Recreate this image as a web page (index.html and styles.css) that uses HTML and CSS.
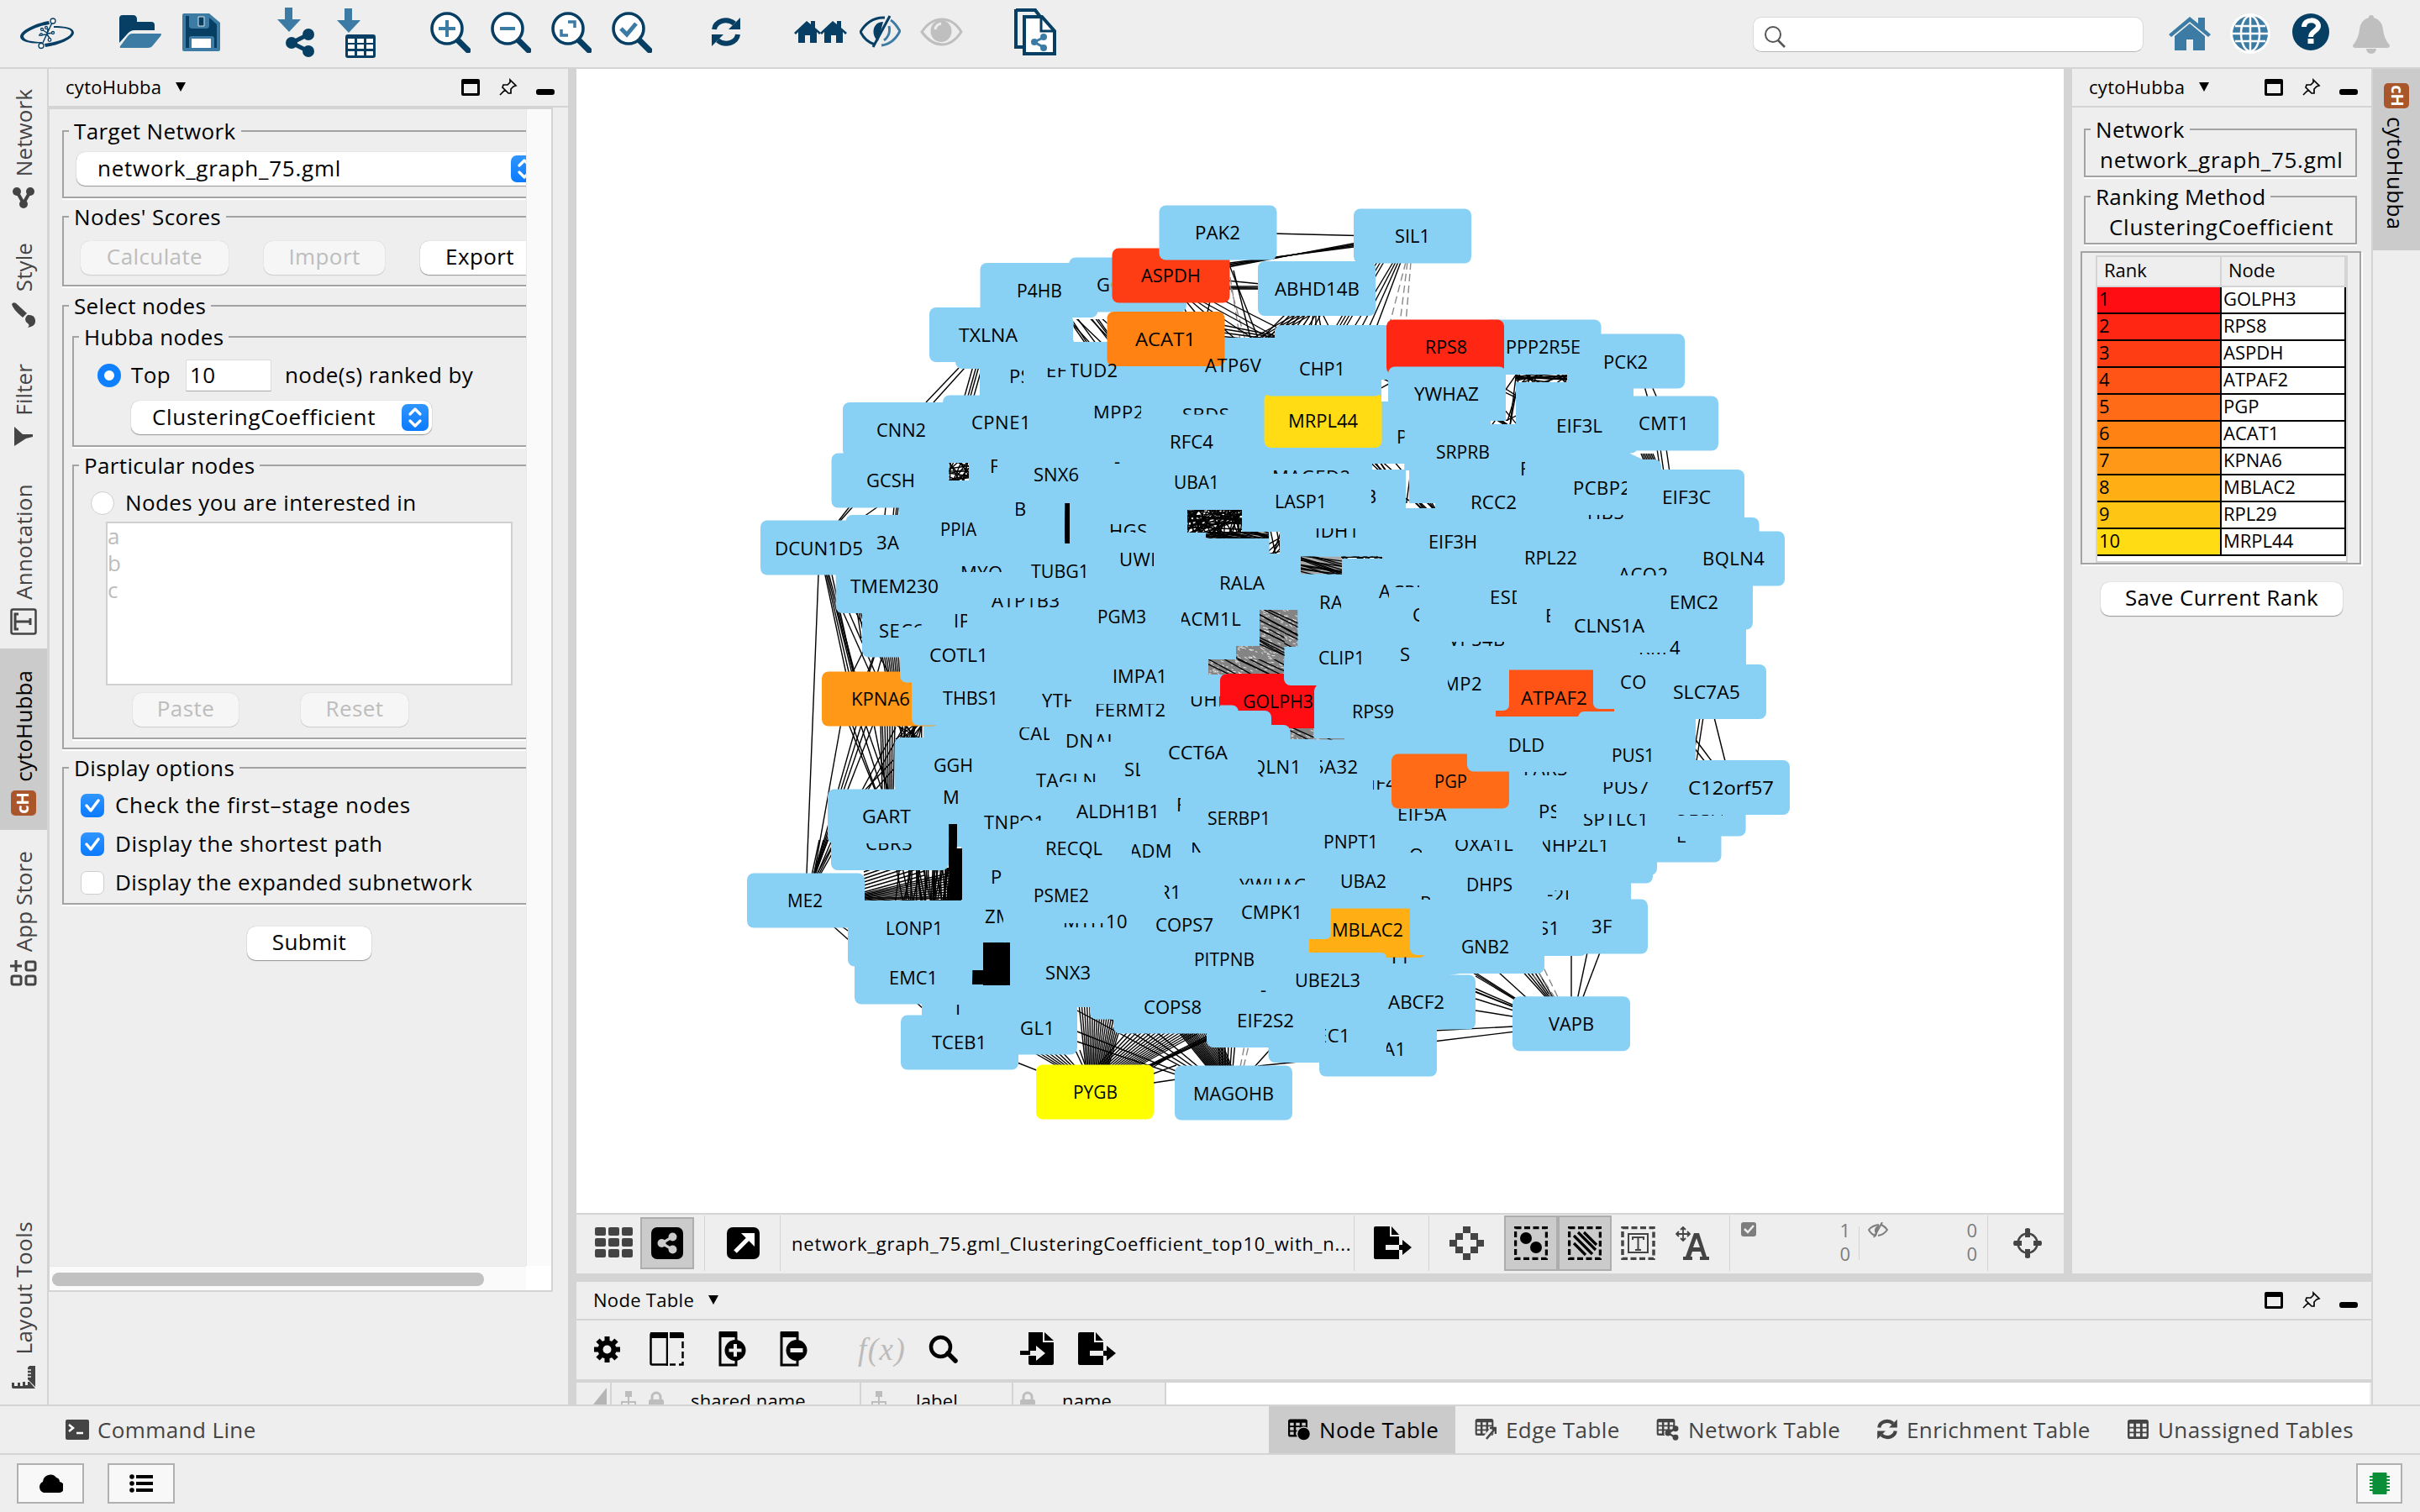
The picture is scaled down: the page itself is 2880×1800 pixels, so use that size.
FILE: index.html
```html
<!DOCTYPE html>
<html lang="en">
<head>
<meta charset="utf-8">
<title>Cytoscape</title>
<link rel="stylesheet" href="styles.css">
</head>
<body>
<svg class="defs" width="0" height="0">
  <defs>
    <linearGradient id="blueGrad" x1="0" y1="0" x2="0" y2="1"><stop offset="0" stop-color="#2f95ff"/><stop offset="1" stop-color="#0a7aff"/></linearGradient>
    <symbol id="float" viewBox="0 0 22 20"><path fill-rule="evenodd" d="M2 0h18a2 2 0 0 1 2 2v16a2 2 0 0 1-2 2H2a2 2 0 0 1-2-2V2a2 2 0 0 1 2-2zM3 6v11h16V6z"/></symbol>
    <symbol id="pin" viewBox="0 0 22 22"><path d="M13 2l7 7-3 1-3 3 0 5-3 0-7-7 1-3 5 0 3-3zM7 14l-6 6" fill="none" stroke="#000" stroke-width="1.7"/></symbol>
    <symbol id="mini" viewBox="0 0 22 20"><rect y="12" width="22" height="7" rx="3"/></symbol>
    <symbol id="share" viewBox="0 0 24 24"><path d="M18 5L6 12l12 7" fill="none" stroke="currentColor" stroke-width="3"/><circle cx="18" cy="5" r="4.6" fill="currentColor"/><circle cx="6" cy="12" r="4.6" fill="currentColor"/><circle cx="18" cy="19" r="4.6" fill="currentColor"/></symbol>
    <symbol id="refresh" viewBox="0 0 36 36"><path d="M4 15C5 6 18 0 28 8" fill="none" stroke="currentColor" stroke-width="6"/><path d="M35 1v14H21z" fill="currentColor"/><path d="M32 21C31 30 18 36 8 28" fill="none" stroke="currentColor" stroke-width="6"/><path d="M1 35V21h14z" fill="currentColor"/></symbol>
    <symbol id="lens" viewBox="0 0 48 50"><path d="M30 32l15 15" stroke="#063f63" stroke-width="7" stroke-linecap="round"/><circle cx="20" cy="21" r="18" fill="#fff" stroke="#063f63" stroke-width="3.6"/></symbol>
    <symbol id="grid3" viewBox="0 0 26 24"><path fill-rule="evenodd" fill="currentColor" d="M3 0h20a3 3 0 0 1 3 3v18a3 3 0 0 1-3 3H3a3 3 0 0 1-3-3V3a3 3 0 0 1 3-3zM2.500 5v4h5V5zm8 0v4h5V5zm8 0v4h5V5zM2.500 11v4h5v-4zm8 0v4h5v-4zm8 0v4h5v-4zM2.500 17v4h5v-4zm8 0v4h5v-4zm8 0v4h5v-4z"/></symbol>
    <symbol id="export" viewBox="0 0 45 40"><path d="M2 0h17v12h11v10H14v6h16v11H2a2 2 0 0 1-2-2V2a2 2 0 0 1 2-2z"/><path d="M21 0l9 10h-9zM30 22h4v-6l11 9-11 9v-6h-4z"/></symbol>
    <symbol id="import" viewBox="0 0 40 40"><path d="M10 0h17v12h13v25a2 2 0 0 1-2 2H12a2 2 0 0 1-2-2v-9h9v6l11-9-11-9v6h-9z"/><path d="M29 0l11 10H29zM0 22h12v5H0z"/></symbol>
    <symbol id="lock" viewBox="0 0 18 26"><path d="M4 12V8a5 5 0 0 1 10 0v4" fill="none" stroke="#bdbdbd" stroke-width="3"/><rect y="11" width="18" height="15" rx="2" fill="#bdbdbd"/></symbol>
    <symbol id="tree" viewBox="0 0 24 26"><path d="M8 1h8v7H8zM11 8h2v5h8v6h-2v-4h-6v4h-2v-4H5v4H3v-6h8zM0 18h7v8H0zm9 0h6v8H9zm8 0h7v8h-7z" fill="#bdbdbd"/></symbol>
    <symbol id="updown" viewBox="0 0 32 32"><rect width="32" height="32" rx="7" fill="url(#blueGrad)"/><path d="M10 12l6-6 6 6M10 20l6 6 6-6" fill="none" stroke="#fff" stroke-width="3.200" stroke-linecap="round" stroke-linejoin="round"/></symbol>
  </defs>
</svg>

<div class="app">
  <header class="toolbar">
    <svg class="t-logo" width="64" height="80"><path d="M34 25C18 28 0 36 0 44c1 6 12 8 26 7.500v-1.500C14 50 4 48 4 43c2-5 16-12 31-14zM40 31c14 0 24 2 24 8-1 8-19 15-34 17l-1-4c17-2 32-8 32-14-1-4-9-5-21-5z" fill="#063f63"/><path d="M38 27L26 53M26 35l7 5M41 39l-9 1M33 34l-1 8M22 42l10-1M32 41l4 6" stroke="#063f63" stroke-width="1.500"/><g fill="#fff" stroke="#063f63" stroke-width="1.300"><circle cx="39" cy="25" r="3"/><circle cx="25" cy="54.500" r="3"/><circle cx="26" cy="35" r="1.500"/><circle cx="31" cy="33" r="1.500"/><circle cx="39" cy="39" r="1.500"/><circle cx="25" cy="41" r="1.300"/><circle cx="35" cy="47.500" r="1.800"/></g></svg>
    <svg class="t-open" width="51" height="80"><path d="M0 51V22q0-4 4-4h12q5 0 5 5v3h17q4 0 4 4v6H18q-5 0-9 5z" fill="#063f63"/><path d="M15 40h34q2 0 0 3l-9 11q-2 3-6 3H2q-2 0-1-2l9-12q2-3 5-3z" fill="#3b7ba4"/></svg>
    <svg class="t-save" width="46" height="80"><path d="M2 16h30l13 11v32q0 2-2 2H2q-2 0-2-2V18q0-2 2-2z" fill="#3b7ba4"/><path d="M4 19h4v12q0 3 4 3h16q4 0 4-3V21l9 8v28h-3V46q0-3-3-3H11q-3 0-3 3v11H4z" fill="#063f63"/><path d="M19 20h7v11h-7z" fill="#063f63" stroke="#dfe8ee" stroke-width="1"/><path d="M11 46h23v11H11z" fill="#fff"/></svg>
    <svg class="t-impnet" width="46" height="80"><path d="M9 9h9v14h10L14 38 0 23h9z" fill="#3b7ba4"/><path d="M37 41L17 51l20 10" fill="none" stroke="#063f63" stroke-width="5"/><g fill="#063f63"><circle cx="37" cy="41" r="7"/><circle cx="17" cy="51" r="7"/><circle cx="37" cy="61" r="7"/></g></svg>
    <svg class="t-imptab" width="47" height="80"><path d="M9 10h9v14h10L14 39 0 24h9z" fill="#3b7ba4"/><rect x="10" y="41" width="36" height="28" rx="3" fill="#063f63"/><path d="M13 46h8v5h-8zm11 0h8v5h-8zm11 0h8v5h-8zM13 53h8v5h-8zm11 0h8v5h-8zm11 0h8v5h-8zM13 61h8v5h-8zm11 0h8v5h-8zm11 0h8v5h-8z" fill="#fff"/></svg>
    <svg class="t-zin" width="49" height="80"><use href="#lens" y="13" width="48" height="50"/><path d="M20 24v20M10 34h20" stroke="#3b7ba4" stroke-width="4"/></svg>
    <svg class="t-z" width="49" height="80"><use href="#lens" y="13" width="48" height="50"/><path d="M11 34h18" stroke="#3b7ba4" stroke-width="4"/></svg>
    <svg class="t-z" width="49" height="80"><use href="#lens" y="13" width="48" height="50"/><path d="M20 26h8v7M12 35v7h8" fill="none" stroke="#3b7ba4" stroke-width="3.500"/></svg>
    <svg class="t-z" width="49" height="80"><use href="#lens" y="13" width="48" height="50"/><path d="M11 34l7 7 11-13" fill="none" stroke="#3b7ba4" stroke-width="5"/></svg>
    <svg class="t-refresh navy" width="36" height="80"><use href="#refresh" y="20" width="36" height="36"/></svg>
    <svg class="t-houses" width="63" height="80" fill="#063f63"><path id="hs" d="M0 39l15-14 5 4v-4h5v8l7 6-2 2-3-3v13h-8v-9h-6v9H5V38l-3 3z"/><use href="#hs" x="31"/></svg>
    <svg class="t-eye" width="49" height="80"><path d="M30 21C16 20 6 29 1 38c4 8 10 13 17 15" fill="none" stroke="#063f63" stroke-width="3"/><path d="M28 26c-13 0-15 16-6 23z" fill="#063f63"/><path d="M36 19L16 56" stroke="#063f63" stroke-width="3"/><path d="M37 24c5 3 8 8 11 13-5 10-12 16-22 17M35 31c2 8-2 14-6 17" fill="none" stroke="#3b7ba4" stroke-width="3"/></svg>
    <svg class="t-eye2" width="51" height="80"><path d="M2 38q10-15 24-15t23 15q-10 15-23 15T2 38z" fill="none" stroke="#bfbfbf" stroke-width="3"/><ellipse cx="25" cy="37" rx="12.500" ry="13" fill="#bfbfbf"/><path d="M18 35q1-6 7-7" stroke="#eee" stroke-width="3" fill="none"/></svg>
    <svg class="t-docs" width="51" height="80"><path d="M2 12h23l6 8M2 11v45h10" fill="none" stroke="#063f63" stroke-width="4"/><path d="M12 20h21l15 17v27H12z" fill="#fff" stroke="#063f63" stroke-width="4"/><path d="M32 20v17h15" fill="none" stroke="#063f63" stroke-width="3"/><path d="M36 44l-12 6 12 7" fill="none" stroke="#3b7ba4" stroke-width="3"/><g fill="#3b7ba4"><circle cx="35" cy="44" r="4"/><circle cx="24" cy="50" r="4"/><circle cx="35" cy="57" r="4"/></g></svg>
    <span class="grow"></span>
    <div class="search"><svg width="28" height="30"><circle cx="11" cy="12" r="9" fill="none" stroke="#555" stroke-width="2"/><path d="M17 19l8 8" stroke="#555" stroke-width="2.500"/></svg></div>
    <svg class="t-home" width="50" height="80" fill="#3b7ba4"><path d="M0 41l25-21 10 8v-7h8v14l7 6-3 3L25 26 3 44z"/><path d="M7 43l18-15 18 15v17H29V47h-8v13H7z"/></svg>
    <svg class="t-globe" width="48" height="80"><circle cx="24" cy="40" r="24" fill="#fff"/><circle cx="24" cy="40" r="21" fill="#3b7ba4"/><path d="M24 19v42M3 40h42M6 31h36M6 49h36" stroke="#fff" stroke-width="2.500"/><ellipse cx="24" cy="40" rx="11" ry="21" fill="none" stroke="#fff" stroke-width="2.500"/></svg>
    <svg class="t-help" width="44" height="80"><circle cx="22" cy="38" r="22" fill="#063f63"/><path d="M14 32c0-10 17-10 17-1 0 6-9 6-9 13" fill="none" stroke="#fff" stroke-width="6"/><path d="M18.500 46h7v6h-7z" fill="#fff"/></svg>
    <svg class="t-bell" width="44" height="80" fill="#bfbfbf"><path d="M22 18q3 0 3 3 10 3 11 14t8 19q0 3-3 3H3q-3 0-3-3 7-8 8-19T19 21q0-3 3-3z"/><path d="M16 58a6 6 0 0 0 12 0z"/></svg>
  </header>

  <div class="middle">
    <nav class="strip">
      <div class="vtab v1"><span class="vt">Network</span><svg width="26" height="25" viewBox="0 0 26 25" fill="#444"><path d="M5 5l8 14 8-14" fill="none" stroke="#444" stroke-width="4"/><circle cx="5" cy="5" r="5"/><circle cx="21" cy="5" r="5"/><circle cx="13" cy="20" r="5"/></svg></div>
      <div class="vtab v2"><span class="vt">Style</span><svg width="28" height="30" viewBox="0 0 28 30" fill="#444"><path d="M0 2q2-3 5-1l13 12-5 5Q1 8 0 2z"/><path d="M19 15q8-1 9 6t-9 9q3-3 0-5t-3-5 3-5z"/></svg></div>
      <div class="vtab v3"><span class="vt">Filter</span><svg width="22" height="23" viewBox="0 0 22 23" fill="#444"><path d="M0 0l10 9h12v3l-8 2-14 9z"/></svg></div>
      <div class="vtab v4"><span class="vt">Annotation</span><svg width="32" height="32" viewBox="0 0 32 32" fill="none" stroke="#444"><rect x="1.500" y="1.500" width="29" height="29" rx="2" stroke-width="2.500"/><path d="M6 16h18M10 7H6v18h4M24 12v8" stroke-width="3"/></svg></div>
      <div class="vtab v5 on"><span class="vt">cytoHubba</span><div class="badge up"><b>cH</b></div></div>
      <div class="vtab v6"><span class="vt">App Store</span><svg width="32" height="31" viewBox="0 0 32 31" fill="none" stroke="#444" stroke-width="3"><rect x="19" y="2" width="11" height="10" rx="2"/><rect x="19" y="19" width="11" height="10" rx="2"/><rect x="2" y="19" width="11" height="10" rx="2"/><path d="M7 0v14M0 7h14"/></svg></div>
      <span class="grow"></span>
      <div class="vtab v7"><span class="vt">Layout Tools</span><svg width="28" height="28" viewBox="0 0 28 28" fill="#444"><path d="M0 20h3v4h4v-4h3v4h3v-5h3v4h3v-4h2l7 8H2q-2 0-2-2z"/><path d="M21 0h7v25l-9-9V2z"/><path d="M19 5h4M19 9h4M19 13h4" stroke="#eee" stroke-width="1.500"/></svg></div>
    </nav>

    <section class="left">
      <div class="phead"><span class="pname">cytoHubba</span><i class="tri"></i><span class="grow"></span><svg class="h1" width="22" height="20"><use href="#float"/></svg><svg class="h2" width="22" height="22"><use href="#pin"/></svg><svg class="h3" width="22" height="20"><use href="#mini"/></svg></div>
      <div class="scroll">
        <div class="view"><div class="form">
          <fieldset class="f1"><legend>Target Network</legend><div class="combo c1"><span>network_graph_75.gml</span><svg width="32" height="32"><use href="#updown"/></svg></div></fieldset>
          <fieldset class="f2"><legend>Nodes' Scores</legend><div class="row"><button class="b1" disabled>Calculate</button><button class="b2" disabled>Import</button><button class="b3">Export</button></div></fieldset>
          <fieldset class="f3"><legend>Select nodes</legend>
            <fieldset class="f4"><legend>Hubba nodes</legend>
              <div class="row toprow"><i class="radio on"></i><span class="top">Top</span><span class="input">10</span><span class="ranked">node(s) ranked by</span></div>
              <div class="combo c2"><span>ClusteringCoefficient</span><svg width="32" height="32"><use href="#updown"/></svg></div>
            </fieldset>
            <fieldset class="f5"><legend>Particular nodes</legend>
              <div class="row radrow"><i class="radio"></i><span>Nodes you are interested in</span></div>
              <div class="area"><div>a</div><div>b</div><div>c</div></div>
              <div class="row prow"><button class="b4" disabled>Paste</button><button class="b5" disabled>Reset</button></div>
            </fieldset>
          </fieldset>
          <fieldset class="f6"><legend>Display options</legend>
            <div class="checks">
              <div class="row"><i class="check on"><svg width="28" height="28"><path d="M7 14l5 6 9-12" fill="none" stroke="#fff" stroke-width="3.500" stroke-linecap="round" stroke-linejoin="round"/></svg></i><span class="k-first">Check the first–stage nodes</span></div>
              <div class="row"><i class="check on"><svg width="28" height="28"><path d="M7 14l5 6 9-12" fill="none" stroke="#fff" stroke-width="3.500" stroke-linecap="round" stroke-linejoin="round"/></svg></i><span class="k-path">Display the shortest path</span></div>
              <div class="row"><i class="check"></i><span class="k-sub">Display the expanded subnetwork</span></div>
            </div>
          </fieldset>
          <button class="submit">Submit</button>
        </div></div>
        <div class="vbar"></div>
        <div class="hbar"><div class="thumb"></div></div>
        <div class="corner"></div>
      </div>
    </section>

    <div class="center">
      <div class="upper">
        <section class="net">
          <svg id="graph" class="graph" width="1770" height="1362" viewBox="686 82 1770 1362"></svg>
          <div class="nbar">
            <svg class="n-grid" width="45" height="36" fill="#444"><path d="M2 0h9q2 0 2 2v6q0 2-2 2H2Q0 10 0 8V2Q0 0 2 0z" id="sq"/><use href="#sq" x="16"/><use href="#sq" x="32"/><use href="#sq" y="13"/><use href="#sq" x="16" y="13"/><use href="#sq" x="32" y="13"/><use href="#sq" y="26"/><use href="#sq" x="16" y="26"/><use href="#sq" x="32" y="26"/></svg>
            <div class="nbtn nb1"><svg width="38" height="38"><rect width="38" height="38" rx="7"/><g color="#ccc"><use href="#share" x="6" y="6" width="26" height="26"/></g></svg></div>
            <i class="sep s1"></i>
            <svg class="n-arrow" width="39" height="38"><rect width="39" height="38" rx="7"/><path d="M10 29L29 10" stroke="#fff" stroke-width="5"/><path d="M17 7h16v16z" fill="#fff"/></svg>
            <i class="sep s2"></i>
            <span class="ntitle">network_graph_75.gml_ClusteringCoefficient_top10_with_n...</span>
            <i class="sep s3"></i>
            <svg class="n-exp" width="45" height="40"><use href="#export"/></svg>
            <i class="sep s4"></i>
            <svg class="n-dia" width="41" height="40" fill="#444"><path id="dq" d="M16 0h9v8h-9z"/><use href="#dq" x="-9" y="8"/><use href="#dq" x="9" y="8"/><use href="#dq" x="-16" y="16"/><use href="#dq" x="16" y="16"/><use href="#dq" x="-9" y="24"/><use href="#dq" x="9" y="24"/><use href="#dq" y="32"/></svg>
            <div class="nbtn nb2"><svg width="40" height="40"><rect x="1.500" y="1.500" width="37" height="37" fill="none" stroke="#000" stroke-width="3.500" stroke-dasharray="7 3.500"/><circle cx="14" cy="14" r="7"/><circle cx="26" cy="25" r="7"/></svg></div>
            <div class="nbtn nb3"><svg width="40" height="40"><rect x="1.500" y="1.500" width="37" height="37" fill="none" stroke="#000" stroke-width="3.500" stroke-dasharray="7 3.500"/><path d="M7 11l22 22M7 20l14 14M12 7l21 21M19 7l15 15" stroke="#000" stroke-width="3.200"/></svg></div>
            <svg class="n-t" width="41" height="40"><rect x="2" y="1.500" width="37" height="37" fill="none" stroke="#444" stroke-width="3.500" stroke-dasharray="7 3.500"/><rect x="9" y="9" width="23" height="22" fill="none" stroke="#444" stroke-width="2"/><path d="M14 16v-3h13v3M20.500 13v15M17 28h7" fill="none" stroke="#444" stroke-width="2"/></svg>
            <svg class="n-a" width="41" height="40" fill="#444"><path d="M24 8h-2L12 36H9v4h11v-4h-2l2-6h10l2 6h-3v4h11v-4h-3L28 8zM21 25l4-11 4 11z" fill-rule="evenodd"/><path d="M9 1v16M1 9h16M6 4l3-3 3 3M6 14l3 3 3-3M4 6L1 9l3 3M14 6l3 3-3 3" stroke="#444" stroke-width="1.800" fill="none"/></svg>
            <i class="sep s5"></i>
            <div class="cnt c-a"><svg width="18" height="18"><rect width="18" height="17" rx="3" fill="#7d7d7d"/><path d="M4 8l4 4 7-8" stroke="#eee" stroke-width="2.500" fill="none"/></svg><div class="nums"><div>1</div><div>0</div></div></div>
            <i class="sep short"></i>
            <div class="cnt c-b"><svg width="24" height="20" fill="none" stroke="#7d7d7d" stroke-width="2"><path d="M13 3Q5 4 1 9q3 6 9 7M16 3q4 2 7 6-4 6-11 7M17 0L7 18"/><path d="M12 5q-5 3-2 8z" fill="#7d7d7d"/></svg><div class="nums"><div>0</div><div>0</div></div></div>
            <i class="sep s6"></i>
            <svg class="n-tgt" width="34" height="36"><circle cx="17" cy="18" r="11.500" fill="none" stroke="#444" stroke-width="2.500"/><path d="M14 1q3-2 6 0v10h-6zM14 25h6v10q-3 2-6 0zM1 15h9v6H1q-2-3 0-6zM24 15h9q2 3 0 6h-9z" fill="#444"/></svg>
          </div>
        </section>
        <section class="right">
          <div class="phead"><span class="pname">cytoHubba</span><i class="tri"></i><span class="grow"></span><svg class="h1" width="22" height="20"><use href="#float"/></svg><svg class="h2" width="22" height="22"><use href="#pin"/></svg><svg class="h3" width="22" height="20"><use href="#mini"/></svg></div>
          <div class="rbody">
            <fieldset class="r1"><legend>Network</legend><div class="rt">network_graph_75.gml</div></fieldset>
            <fieldset class="r2"><legend>Ranking Method</legend><div class="rt rt2">ClusteringCoefficient</div></fieldset>
            <div class="rankbox"><table class="rank">
              <thead><tr><th>Rank</th><th>Node</th></tr></thead>
              <tbody>
                <tr><td class="k1">1</td><td>GOLPH3</td></tr><tr><td class="k2">2</td><td>RPS8</td></tr><tr><td class="k3">3</td><td>ASPDH</td></tr><tr><td class="k4">4</td><td>ATPAF2</td></tr><tr><td class="k5">5</td><td>PGP</td></tr><tr><td class="k6">6</td><td>ACAT1</td></tr><tr><td class="k7">7</td><td>KPNA6</td></tr><tr><td class="k8">8</td><td>MBLAC2</td></tr><tr><td class="k9">9</td><td>RPL29</td></tr><tr><td class="k10">10</td><td>MRPL44</td></tr>
              </tbody></table></div>
            <button class="saverank">Save Current Rank</button>
          </div>
        </section>
      </div>
      <section class="tablepanel">
        <div class="phead nt"><span class="pname">Node Table</span><i class="tri"></i><span class="grow"></span><svg class="h1" width="22" height="20"><use href="#float"/></svg><svg class="h2" width="22" height="22"><use href="#pin"/></svg><svg class="h3" width="22" height="20"><use href="#mini"/></svg></div>
        <div class="tbar">
          <svg class="m-gear" width="31" height="31"><circle cx="15.500" cy="15.500" r="8" fill="none" stroke="#000" stroke-width="6"/><path d="M15.500 0v6M15.500 25v6M0 15.500h6M25 15.500h6M4.500 4.500l4 4M22.500 22.500l4 4M4.500 26.500l4-4M22.500 8.500l4-4" stroke="#000" stroke-width="6"/></svg>
          <svg class="m-col" width="41" height="40"><path d="M20 1.500H3q-1.500 0-1.500 1.500v34q0 1.500 1.500 1.500h17M21 0v40" fill="none" stroke="#000" stroke-width="2.500"/><path d="M1 0h38q2 0 2 2v5H1z"/><path d="M23 0v40" stroke="#eee" stroke-width="2"/><path d="M39.500 11v27.500H24" fill="none" stroke="#000" stroke-width="2.500" stroke-dasharray="8 4"/></svg>
          <svg class="m-add" width="33" height="42"><path d="M21 12V2H2v38h19v-6" fill="none" stroke="#000" stroke-width="3"/><path d="M1 0h21v7H1z"/><circle cx="20" cy="22.500" r="12.500"/><path d="M20 15v15M12.500 22.500h15" stroke="#eee" stroke-width="4"/></svg>
          <svg class="m-del" width="33" height="42"><path d="M21 12V2H2v38h19v-6" fill="none" stroke="#000" stroke-width="3"/><path d="M1 0h21v7H1z"/><circle cx="20" cy="22.500" r="12.500"/><path d="M12.500 22.500h15" stroke="#eee" stroke-width="5"/></svg>
          <span class="fx">f(x)</span>
          <svg class="m-find" width="35" height="34"><circle cx="14.500" cy="14.500" r="11.500" fill="none" stroke="#000" stroke-width="4.500"/><path d="M23 22l9 9" stroke="#000" stroke-width="5.500" stroke-linecap="round"/></svg>
          <svg class="m-imp" width="40" height="40"><use href="#import"/></svg>
          <svg class="m-exp" width="45" height="40"><use href="#export"/></svg>
        </div>
        <div class="thead">
          <div class="tc tc0"><svg width="16" height="26"><path d="M16 6v20H0z" fill="#b5b5b5"/></svg></div>
          <div class="tc tc1"><svg width="24" height="26"><use href="#tree"/></svg><svg class="lk" width="18" height="26"><use href="#lock"/></svg><span>shared name</span></div>
          <div class="tc tc2"><svg width="24" height="26"><use href="#tree"/></svg><span>label</span></div>
          <div class="tc tc3"><svg width="18" height="26"><use href="#lock"/></svg><span>name</span></div>
        </div>
      </section>
    </div>

    <nav class="rstrip"><div class="rtab"><div class="badge down"><b>cH</b></div><span>cytoHubba</span></div></nav>
  </div>

  <div class="tabs">
    <div class="tab cmd"><svg width="28" height="24"><rect width="28" height="24" rx="2" fill="#444"/><path d="M4 6l5 4-5 4M13 16h8" stroke="#fff" stroke-width="2.500" fill="none"/></svg><span>Command Line</span></div>
    <span class="grow"></span>
    <div class="tab on b-node"><svg width="26" height="26"><use href="#grid3" width="23" height="22"/><circle cx="18.500" cy="18" r="8" stroke="#ccc" stroke-width="1.500"/></svg><span>Node Table</span></div>
    <div class="tab b-edge"><svg width="26" height="26"><use href="#grid3" width="23" height="20"/><path d="M11 25L21 13" stroke="#eee" stroke-width="6"/><path d="M14 24l10-12M18 11h7v7" stroke="#444" stroke-width="2.500" fill="none"/></svg><span>Edge Table</span></div>
    <div class="tab b-net"><svg width="28" height="26"><use href="#grid3" width="23" height="20"/><path d="M9 18l19-9v17H15z" fill="#eee"/><use href="#share" x="9" y="8" width="19" height="18"/></svg><span>Network Table</span></div>
    <div class="tab b-enr"><svg width="26" height="26"><use href="#refresh"  width="26" height="25"/></svg><span>Enrichment Table</span></div>
    <div class="tab b-un"><svg width="27" height="26"><use href="#grid3" y="1" width="27" height="23"/></svg><span>Unassigned Tables</span></div>
  </div>
  <footer class="status">
    <div class="sbtn"><svg width="30" height="22"><path d="M7 22a7 7 0 0 1-1-13A9 9 0 0 1 22 4q4 1 4 5a6.500 6.500 0 0 1-2 13z"/></svg></div>
    <div class="sbtn"><svg width="28" height="22"><path d="M8 3h20M8 11h20M8 19h20" stroke="#000" stroke-width="4"/><circle cx="3" cy="3" r="2.800"/><circle cx="3" cy="11" r="2.800"/><circle cx="3" cy="19" r="2.800"/></svg></div>
    <span class="grow"></span>
    <div class="sbtn mem"><svg width="24" height="28"><path d="M2 5v20M22 5v20" stroke="#0a8f38" stroke-width="4" stroke-dasharray="2 2"/><rect x="3.500" y="1" width="17" height="26" rx="1" fill="#0a8f38"/></svg></div>
  </footer>
</div>
<script src="graph.js"></script>
</body>
</html>
```
FILE: styles.css
```css
* { box-sizing: border-box; }
body { margin: 0; background: #eee; color: #000; font-family: "Open Sans", "Noto Sans", sans-serif; font-size: 26px; width: 2880px; height: 1800px; overflow: hidden; white-space: nowrap; }
.defs { position: absolute; }
svg { display: block; flex: none; }
.grow { flex: 1; }
.app { display: flex; flex-direction: column; width: 2880px; height: 1800px; }
.row { display: flex; align-items: center; }

/* main toolbar */
.toolbar { height: 82px; border-bottom: 2px solid #d4d4d4; display: flex; padding: 0 36px 0 24px; }
.navy { color: #063f63; }
.t-open { margin-left: 54px; }
.t-save { margin-left: 24px; }
.t-impnet { margin-left: 67px; }
.t-imptab { margin-left: 25px; }
.t-zin { margin-left: 64px; }
.t-z { margin-left: 23px; }
.t-refresh { margin-left: 69px; }
.t-houses { margin-left: 63px; }
.t-eye { margin-left: 15px; }
.t-eye2 { margin-left: 23px; }
.t-docs { margin-left: 61px; }
.search { width: 465px; height: 42px; margin-top: 20px; border-radius: 10px; background: #fff; border: 1px solid #dadada; border-bottom-color: #b8b8b8; padding: 8px 0 0 12px; }
.t-home { margin-left: 30px; }
.t-globe { margin-left: 23px; }
.t-help { margin-left: 26px; }
.t-bell { margin-left: 28px; }

.middle { display: flex; height: 1590px; }

/* vertical tabs */
.strip { width: 58px; border-right: 2px solid #d4d4d4; display: flex; flex-direction: column; color: #444; }
.vtab { display: flex; flex-direction: column; align-items: center; justify-content: flex-end; padding-bottom: 18px; }
.vtab.on { background: #cbcbcb; color: #000; }
.vt { writing-mode: vertical-rl; transform: rotate(180deg); line-height: 34px; margin-bottom: 13px; letter-spacing: .1px; }
.v1 { height: 184px; } .v2 { height: 142px; } .v3 { height: 141px; }
.v4 { height: 223px; padding-bottom: 16px; } .v5 { height: 216px; padding-bottom: 17px; }
.v6 { height: 204px; } .v7 { height: 230px; }
.v5 .vt, .v6 .vt, .v4 .vt { margin-bottom: 10px; }
.v4 .vt { letter-spacing: .3px; }
.v7 .vt { letter-spacing: .45px; }
.badge { width: 30px; height: 30px; border-radius: 5px; background: #a9562a; color: #fff; font-size: 20px; line-height: 28px; text-align: center; }
.badge b { display: block; }
.badge.up { transform: rotate(-90deg); }
.badge.down { transform: rotate(90deg); }

/* panel heading */
.phead { height: 46px; border-bottom: 2px solid #d4d4d4; display: flex; align-items: center; padding: 0 16px 1px 20px; font-size: 22px; }
.pname { letter-spacing: .3px; margin-top: -1px; }
.tri { width: 0; height: 0; margin-left: 17px; border: 6px solid transparent; border-top: 11px solid #000; border-bottom: 0; }
.h2 { margin-left: 23px; }
.h3 { margin-left: 22px; }

.left { width: 628px; border-right: 10px solid #d4d4d4; }
.scroll { width: 600px; height: 1410px; border: 2px solid #d4d4d4; border-left-width: 1px; display: grid; grid-template: 1377px 29px / 567px 30px; }
.view { overflow: hidden; }
.vbar { background: #fafafa; border-left: 1px solid #e8e8e8; }
.hbar { background: #fafafa; border-top: 1px solid #e8e8e8; padding: 7px 0 0 3px; }
.thumb { width: 514px; height: 16px; border-radius: 8px; background: #c1c1c1; }
.corner { background: #fff; }
.form { width: 617px; padding: 11px 14px 0 15px; letter-spacing: .4px; }
fieldset { margin: 0; padding: 0; min-width: 0; border: 2px solid #a3a3a3; box-shadow: 0 2px 0 #fff; }
legend { padding: 0 6px; margin-left: 6px; line-height: 30px; height: 30px; letter-spacing: .35px; }
.f1 { height: 95px; padding: 10px 0 0 15px; }
.f1 > legend { margin-left: -9px; }
.f2 { height: 98px; margin-top: 7px; padding: 14px 0 0 20px; }
.f2 > legend, .f6 > legend { margin-left: -14px; }
.f3 { height: 543px; margin-top: 8px; padding: 7px 0 0 10px; }
.f3 > legend { margin-left: -4px; }
.f4 { height: 146px; padding-top: 12px; }
.f5 { height: 341px; margin-top: 7px; padding-top: 16px; }
.f6 { height: 178px; margin-top: 7px; padding: 16px 0 0 20px; }
.combo { height: 40px; background: #fff; border-radius: 10px; display: flex; align-items: center; justify-content: space-between; box-shadow: 0 1px 1px rgba(0,0,0,.35), 0 0 1px rgba(0,0,0,.3); padding: 0 4px 1px 25px; letter-spacing: .75px; }
.combo span { margin-top: -2px; }
.c1 { width: 553px; }
.c2 { width: 358px; margin: 11px 0 0 68px; letter-spacing: .68px; }
button { font: inherit; letter-spacing: .4px; color: #000; display: block; height: 40px; border: 0; border-radius: 10px; background: #fff; padding: 0 0 5px; box-shadow: 0 1px 1px rgba(0,0,0,.35), 0 0 1px rgba(0,0,0,.3); }
button:disabled { color: #bdbdbd; background: #f6f6f6; box-shadow: 0 1px 1px rgba(0,0,0,.12), 0 0 1px rgba(0,0,0,.2); }
.b1 { width: 176px; } .b2 { width: 144px; margin-left: 42px; } .b3 { width: 142px; margin-left: 42px; }
.b4 { width: 126px; margin-left: 70px; } .b5 { width: 128px; margin-left: 74px; }
.radio { width: 28px; height: 28px; border-radius: 50%; background: #fff; border: 1px solid #cfcfcf; }
.radio.on { border: 8px solid #0f80ff; }
.toprow { height: 38px; padding-left: 28px; }
.top { width: 65px; margin: -2px 0 0 12px; }
.input { width: 102px; height: 38px; background: #fff; border: 1px solid #dcdcdc; border-bottom-color: #aaa; padding-left: 4px; line-height: 34px; }
.ranked { margin: -2px 0 0 16px; }
.radrow { height: 28px; padding-left: 20px; }
.radrow span { margin: -2px 0 0 13px; }
.area { width: 484px; height: 195px; margin: 8px 0 0 38px; background: #fff; border: 2px solid #d0d0d0; color: #bdbdbd; line-height: 32px; }
.area div:first-child { margin-top: -1px; }
.prow { margin-top: 9px; }
.checks { display: flex; flex-direction: column; gap: 18px; }
.checks .row { height: 28px; }
.checks span { margin: -2px 0 0 13px; }
.k-first { letter-spacing: .7px; }
.k-path { letter-spacing: .6px; }
.check { width: 28px; height: 28px; border-radius: 7px; background: #fff; border: 1px solid #cfcfcf; }
.check.on { border: 0; background: linear-gradient(#2f95ff, #0a7aff); }
.submit { width: 148px; margin: 26px 0 0 220px; }

/* network view */
.center { width: 2138px; border-right: 2px solid #d4d4d4; display: flex; flex-direction: column; }
.upper { display: flex; height: 1444px; border-bottom: 10px solid #d4d4d4; }
.net { width: 1780px; border-right: 10px solid #d4d4d4; }
.graph { background: #fff; }
.graph text { font-size: 22px; text-anchor: middle; }
.nbar { height: 72px; border-top: 2px solid #d4d4d4; display: flex; align-items: center; padding: 0 0 2px 22px; }
.n-grid { margin-top: -3px; }
.nbtn { width: 64px; height: 66px; background: #cbcbcb; border: 2px solid #adadad; display: flex; align-items: center; justify-content: center; }
.nb1 { height: 62px; margin-left: 9px; }
.nb2 { margin-left: 24px; }
.sep { width: 1px; height: 66px; background: #d4d4d4; }
.s1 { margin-left: 12px; } .s2 { margin-left: 24px; } .s4 { margin-left: 20px; } .s5 { margin-left: 23px; }
.s6 { margin-left: 12px; }
.n-arrow { margin-left: 26px; }
.ntitle { font-size: 22px; width: 669px; margin-left: 13px; letter-spacing: .82px; }
.n-exp { margin-left: 23px; }
.n-dia { margin-left: 24px; }
.n-t { margin-left: 11px; }
.n-a { margin-left: 24px; }
.cnt { display: flex; justify-content: space-between; height: 60px; color: #7d7d7d; font-size: 22px; }
.cnt svg { margin-top: 5px; }
.nums { line-height: 28px; }
.c-a { width: 130px; margin-left: 13px; }
.short { height: 40px; margin-left: 10px; }
.c-b { width: 130px; margin-left: 10px; }
.n-tgt { margin-left: 30px; }

/* result panel */
.right { width: 356px; }
.rbody { padding: 11px 12px 0 10px; display: flex; flex-direction: column; }
.rbody fieldset { width: 325px; margin-left: 4px; }
.rbody legend { letter-spacing: .3px; }
.r1 { height: 72px; }
.r2 { height: 72px; margin-top: 8px; }
.rt { padding: 6px 0 0 17px; line-height: 30px; letter-spacing: .73px; }
.rt2 { padding-left: 28px; }
.rankbox { width: 334px; height: 373px; margin-top: 8px; border: 2px solid #a3a3a3; box-shadow: 2px 2px 0 #fff; padding: 3px 0 0 16px; }
.rank { width: 300px; border: 2px solid #d4d4d4; border-collapse: separate; border-spacing: 0; font-size: 22px; background: #fff; height: 366px; display: block; }
.rank th { height: 36px; width: 148px; font-weight: 400; text-align: left; padding: 0 0 4px 8px; line-height: 28px; background: #eee; border-bottom: 2px solid #d4d4d4; border-right: 2px solid #d4d4d4; }
.rank td { height: 32px; padding: 0 0 4px 2px; line-height: 26px; border-bottom: 2px solid #000; border-right: 2px solid #000; }
.k1 { background: #ff0d13; } .k2 { background: #ff2614; } .k3 { background: #ff3d15; } .k4 { background: #ff5415; } .k5 { background: #ff6b16; }
.k6 { background: #ff8213; } .k7 { background: #ff9816; } .k8 { background: #ffae14; } .k9 { background: #ffc514; } .k10 { background: #ffdc14; }
.saverank { width: 288px; margin: 21px 0 0 24px; }
.rstrip { width: 56px; }
.rtab { height: 216px; background: #cbcbcb; padding-top: 17px; display: flex; flex-direction: column; align-items: center; }
.rtab span { writing-mode: vertical-rl; line-height: 34px; margin: 10px 2px 0 0; letter-spacing: .3px; }

/* table panel */
.tbar { height: 74px; border-bottom: 4px solid #d4d4d4; display: flex; align-items: center; padding: 0 0 2px 21px; }
.m-col { margin-left: 35px; } .m-add { margin-left: 41px; } .m-del { margin-left: 40px; }
.fx { width: 60px; margin-left: 60px; font: italic 37px "Liberation Serif", serif; color: #bcbcbc; letter-spacing: 1.5px; }
.m-find { margin-left: 24px; } .m-imp { margin-left: 74px; } .m-exp { margin-left: 29px; }
.thead { height: 26px; background: #fff; display: flex; overflow: hidden; font-size: 22px; margin: 0 2px; }
.tc { background: #eee; border-right: 2px solid #d4d4d4; display: flex; height: 26px; }
.tc svg { margin-top: 9px; }
.tc0 svg { margin: 0; }
.tc span { line-height: 30px; margin-top: 6px; letter-spacing: .15px; }
.tc0 { width: 40px; padding-left: 18px; }
.tc1 { width: 297px; padding-left: 8px; }
.tc1 .lk { margin-left: 12px; } .tc1 span { margin-left: 32px; }
.tc2 { width: 181px; padding-left: 9px; } .tc2 span { margin-left: 32px; }
.tc3 { width: 182px; padding-left: 8px; } .tc3 span { margin-left: 32px; }

/* bottom tabs */
.tabs { height: 60px; border-top: 2px solid #d4d4d4; border-bottom: 2px solid #d4d4d4; display: flex; color: #444; letter-spacing: .4px; }
.tab { display: flex; align-items: center; }
.tab svg { margin-right: 11px; }
.tab.on { background: #cbcbcb; color: #000; }
.cmd { padding-left: 78px; }
.tab.cmd svg { margin-right: 10px; }
.b-node { width: 222px; padding-left: 23px; }
.b-edge { width: 216px; padding-left: 23px; }
.b-net { width: 262px; padding-left: 23px; }
.b-enr { width: 296px; padding-left: 23px; }
.b-un { width: 374px; padding-left: 25px; }
.tab.b-net svg, .tab.b-un svg, .tab.b-enr svg { margin-right: 10px; }
.status { height: 68px; display: flex; align-items: flex-start; padding: 10px 21px 0 20px; }
.sbtn { width: 80px; height: 48px; margin-right: 28px; border: 2px solid #b0b0b0; background: #f8f8f8; display: flex; align-items: center; justify-content: center; }
.mem { width: 55px; margin-right: 0; }
```
FILE: graph.js
```js
const NS = 'http://www.w3.org/2000/svg';
const svg = document.getElementById('graph');
const BLUE = '#89d0f5';
let clipId = 0;

function el(name, attrs, parent = svg) {
  const e = document.createElementNS(NS, name);
  for (const k in attrs) e.setAttribute(k, attrs[k]);
  parent.appendChild(e);
  return e;
}
let seed = 7;
const rnd = () => (seed = (seed * 16807) % 2147483647) / 2147483647;

function line(x1, y1, x2, y2, dash, parent) {
  const a = { x1, y1, x2, y2, stroke: dash ? '#888' : '#000', 'stroke-width': 1.4 };
  if (dash) a['stroke-dasharray'] = '9 5';
  el('line', a, parent);
}
function fan(cx, cy, x1, y1, x2, y2, n, dash, parent) {
  for (let i = 0; i < n; i++) {
    const t = n > 1 ? i / (n - 1) : 0;
    line(cx, cy, x1 + (x2 - x1) * t, y1 + (y2 - y1) * t, dash, parent);
  }
}
function clipRect(x, y, w, h) {
  const id = 'c' + clipId++;
  el('rect', { x, y, width: w, height: h }, el('clipPath', { id }));
  return `url(#${id})`;
}

/* ---- edges around the rim ---- */
line(1141, 438, 1102, 479); line(1148, 438, 1111, 479);
for (const d of [0, 4, 7, 11]) line(1158 + d, 436, 1147 + d, 475);
line(1012, 602, 998, 620); line(1016, 602, 1000, 620); line(1045, 603, 1028, 615);
for (const x of [1054, 1064, 1067, 1069]) line(x, 603, x - 1, 614);
line(974, 684, 960, 1040);
for (let i = 0; i < 4; i++) line(981 + i * 1.5, 680, 1007 + i * 3.5, 802);
line(990, 684, 1016, 802); line(996, 726, 1016, 802); line(1003, 728, 1036, 802); line(1010, 728, 1042, 802); line(1018, 728, 1058, 802);
for (let i = 0; i < 3; i++) line(1020 + i * 2, 728, 1025 + i * 4, 760);
line(1030, 770, 1014, 802); line(1040, 780, 1032, 802); line(1041, 780, 1034, 802); line(1050, 780, 1044, 802);
for (let i = 0; i < 9; i++) line(1050 + i * 2.4, 780, 1056 + i * 1.9, 815);
for (const a of [1001, 1020, 1026, 1032, 1040]) line(968, 1045, a, 860);
line(970, 1045, 1066, 866); line(974, 1045, 1075, 866);
for (const [a, b] of [[1010, 1042], [1014, 1043], [1024, 1050], [1030, 1058], [1040, 1056], [1048, 1050]]) line(a, 862, b, 942);
for (let i = 0; i < 6; i++) line(1050 + i * 3, 862, 1053 + i * 2, 942);
line(1028, 942, 1063, 905); line(1040, 942, 1063, 916);
for (let i = 0; i < 20; i++) line(1064 + rnd() * 36, 862, 1064 + rnd() * 36, 880);
for (let i = 0; i < 5; i++) line(966 + i * 2, 1042, 975 + i * 5, 1000);
fan(960, 1080, 1144, 1036, 1144, 1074, 12);
for (let i = 0; i < 8; i++) line(1028, 1062 - i * 4, 1100, 1042 - i * 5);
line(1028, 1069, 1144, 1069);
for (let i = 0; i < 60; i++) { const x = 1062 + Math.sqrt(rnd()) * 84; line(x, 1033, x - 10 + rnd() * 20, 1074); }
line(992, 1103, 1010, 1119); line(1002, 1103, 1012, 1110); line(1090, 1193, 1100, 1202);
line(1208, 1264, 1236, 1275);
fan(1303, 1295, 1225, 1250, 1262, 1250, 7); fan(1303, 1300, 1275, 1240, 1285, 1250, 2);
for (let i = 0; i < 19; i++) line(1284 + i * 3.2, 1195, 1292 + i * 1.5, 1270);
for (let i = 0; i < 16; i++) line(1345 + i * 6, 1225, 1305 + i * 3.2, 1270);
fan(1303, 1300, 1440, 1232, 1520, 1200, 4);
for (let i = 0; i < 20; i++) line(1400 + i * 2.5, 1225, 1438 + i * 1.5, 1272);
for (let i = 0; i < 6; i++) line(1450 + i * 4, 1240, 1452 + i * 3, 1272);
fan(1462, 1300, 1280, 1202, 1330, 1190, 4);
fan(1462, 1300, 1282, 1228, 1282, 1240, 2);
line(1373, 1289, 1400, 1285); line(1373, 1278, 1400, 1268); line(1373, 1270, 1405, 1250);
line(1480, 1270, 1486, 1245, 1); line(1476, 1270, 1481, 1245, 1);
line(1493, 1270, 1511, 1250); line(1497, 1269, 1545, 1264);
for (const p of [[1700, 1158], [1740, 1150], [1756, 1158], [1756, 1162], [1756, 1177], [1756, 1181], [1756, 1189], [1756, 1203], [1784, 1158]]) line(1850, 1218, ...p);
fan(1862, 1212, 1808, 1152, 1828, 1152, 5); fan(1866, 1212, 1816, 1150, 1836, 1150, 3, 1);
line(1870, 1200, 1870, 1134); line(1875, 1200, 1889, 1134); line(1879, 1200, 1904, 1134);
line(1820, 1221, 1705, 1227); line(1820, 1226, 1705, 1240);
line(2040, 854, 2053, 906); line(2027, 854, 2019, 906); line(2023, 854, 2017, 890); line(2016, 878, 2037, 906); line(2016, 890, 2030, 908);
line(1957, 460, 1961, 474); line(1966, 460, 1972, 474);
for (const x of [1972, 1976, 1983]) line(x, 534, x + 4, 562);
for (let i = 0; i < 8; i++) line(1953 + i * 2, 540, 1957 + i * 2, 550);
line(1937, 1053, 1945, 1046);
line(1515, 278, 1615, 280.5);
for (let i = 0; i < 4; i++) line(1440, 322 - i * 2, 1615, 289 + i * 1.5);
line(1460, 334, 1500, 338); line(1460, 341, 1500, 341); line(1460, 344, 1500, 344); line(1460, 342.5, 1500, 343);
line(1464, 318, 1497, 402); line(1468, 322, 1488, 402); line(1460, 326, 1482, 405, 1); line(1464, 330, 1476, 405, 1);
for (let i = 0; i < 5; i++) line(1405 + i * 6, 358, 1428 + i * 22, 405);
line(1440, 358, 1437, 372); line(1445, 360, 1520, 402); line(1455, 357, 1530, 395);
for (let i = 0; i < 4; i++) { line(1490 + i * 7, 403, 1550 + i * 6, 370); line(1440, 384 + i * 5, 1530, 402 + i * 2); }
for (let i = 0; i < 8; i++) line(1530 + i * 6, 374, 1500 + i * 8, 404);
for (const x of [1563, 1566, 1569, 1574]) line(x, 374, x + (x - 1566), 390);
for (let i = 0; i < 4; i++) { line(1667 - i * 3, 312, 1637 - i * 9, 392); line(1648 - i * 4, 310, 1600 - i * 4, 392); }
line(1673, 312, 1654, 385, 1); line(1675, 312, 1666, 385, 1); line(1679, 312, 1673, 385, 1);

/* ---- body of overlapping nodes ---- */
el('polygon', { fill: BLUE, points: '1166,400 1317,407 1457,402 1517,402 1517,392 1650,392 1650,440 1792,440 1865,446 1865,455 1940,462 1940,540 1955,547 1970,552 1977,600 2076,624 2088,640 2086,700 2080,745 2078,749 2078,791 2018,850 2018,905 2070,960 2070,990 2040,996 2040,1020 1965,1026 1965,1040 1941,1048 1941,1071 1889,1100 1882,1134 1838,1130 1830,1154 1756,1156 1700,1165 1700,1215 1515,1240 1440,1243 1437,1230 1335,1226 1325,1214 1305,1210 1297,1199 1276,1199 1276,1225 1102,1225 1102,1195 1022,1180 1022,1150 1014,1144 1014,1090 1029,1072 1144,1072 1144,1008 1138,1008 1138,981 1129,981 1129,1000 1064,960 1070,882 1099,878 1099,864 1071,812 1071,780 1032,780 1030,730 1000,720 1010,618 1070,613 1070,604 1060,560 1010,500 1128,545 1128,475 1166,475' });

/* [cx, cy, colour] in stacking order */
const nodes = [
  [1342, 339], [1207, 406.5], [1236.5, 345.5], [1393.5, 328, '#ff3d15'], [1449.5, 277], [1176, 398.5], [1387.5, 403.5, '#ff8213'],
  [1192, 503], [1073, 511.5], [1059.5, 572], [1076.5, 645.5], [975, 652], [1064.7, 697.5], [1096, 750],
  [1587, 419.5], [1681, 281], [1567, 343.5], [1835.5, 413], [1935, 430], [1720, 413, '#ff2614'], [1722, 469],
  [1574.5, 500.5, '#ffdc14'], [1574.5, 439], [1975, 504], [1874, 487.5], [1879, 507], [1907, 579.5], [2023.6, 648.5], [2006, 591.5], [2054, 665],
  [2016, 717], [2008, 770], [2007.6, 963], [1978.5, 994], [2060, 937.5], [2032, 823.5], [1902, 1009.5], [1897, 1019],
  [1819, 1105.6], [1891, 1103], [1768, 1126.5], [1870, 1218.7], [1686, 1193], [1579.5, 1232.5], [1640, 1249], [1506, 1214.5], [1468, 1301],
  [1303, 1300, '#ffff00'], [1367, 1181], [1395, 1198], [1212, 1223], [1167, 1202], [1142, 1241], [1079, 1118], [1087, 1163], [959, 1072],
  [1048, 832, '#ff9816'], [1141, 780], [1155, 831], [1134.5, 910.5], [1059, 1003.5], [1055, 972],
  [1522, 834.5, '#ff0d13'], [1404, 872], [1443, 878.5], [1465.5, 895.5], [1598, 783.5], [1634, 847],
  [1726, 930, '#ff6b16'], [1816, 886]
];
for (const [x, y, c] of nodes) el('rect', { x: x - 70, y: y - 32.5, width: 140, height: 65, rx: 8, fill: c || BLUE });
el('path', { fill: '#ff5415', d: 'M1796 797.5h100v40q1 7 8 6.5h17v3h-36q-5 0-7 6h-98v-7h8q8 0 8-8z' });
el('path', { fill: '#ffae14', d: 'M1584 1081.5h94v48q1 7 8 7.5h9.5q-3 3-6 3h-40q0-6-6-6h-85.5v-16h19q7 0 7-8z' });

/* ---- gaps through which edges show: [x, y, w, h, density, tone] ---- */
const gaps = [
  [1277.5, 380, 40, 27, 10, 'd'], [1129.5, 551, 23.5, 21, 22, 'w'], [1267.5, 599, 5.5, 48, 20, 'k'],
  [1413, 607, 65, 27, 64, 'w'], [1435, 633, 75, 8, 26, 'g'], [1510.5, 633, 12.5, 26, 8, 'w'],
  [1644, 452, 8, 26, 2, 'w'], [1792, 446, 12, 59, 8, 'w'], [1804, 446, 61, 9, 22, 'w'], [1774, 501, 22, 4, 5, 'w'],
  [1633, 552, 38.5, 7, 8, 'd'], [1673, 560, 4, 45, 2, 'w'], [1673, 599, 35, 6, 10, 'd'],
  [1548, 662.5, 49, 21, 14, 'g'], [1596, 662.5, 49, 2.5, 14, 'w'],
  [1499, 726, 45.5, 44, 7, 'G'], [1471, 749, 57.5, 39, 9, 'G'], [1438, 785, 90, 18, 8, 'G'],
  [1535.5, 867, 28, 13, 2, 'G'], [1564, 879, 36, 1.5, 1, 'G'],
  [1129.5, 981, 9, 55, 90, 'k'], [1130, 1036, 15, 35, 60, 'k'], [1138, 1010, 6.5, 28, 60, 'k'], [1170, 1122.5, 32, 50, 150, 'k'], [1157.5, 1155, 13, 17, 30, 'k']
];
for (const [x, y, w, h, n, tone] of gaps) {
  const g = el('g', { 'clip-path': clipRect(x, y, w, h) });
  el('rect', { x, y, width: w, height: h, fill: { w: '#fff', d: '#fff', g: '#aaa', G: '#848484', k: '#000' }[tone] }, g);
  if (tone === 'G') for (let i = 0; i < w * h / 22; i++) {
    const px = x + rnd() * w, py = y + rnd() * h;
    el('line', { x1: px, y1: py, x2: px + 2 + rnd() * 2, y2: py + rnd() * 2, stroke: '#e8e8e8', 'stroke-width': 1 }, g);
  }
  for (let i = 0; i < n; i++) {
    const px = x + rnd() * w, py = y + rnd() * h;
    const a = { G: .42 + rnd() * .1, g: .1 + rnd() * .3, k: 1.5 + rnd() * .3, d: .7 + rnd() * .35, w: rnd() * 3.14 }[tone];
    const dx = Math.cos(a) * 140, dy = Math.sin(a) * 140;
    line(px - dx, py - dy, px + dx, py + dy, 0, g);
  }
}
/* node bodies bordering the open areas */
for (const [x, y, w, h] of [[1438, 740, 33, 45], [1471, 726, 28, 43]]) el('rect', { x, y, width: w, height: h, fill: BLUE });
el('rect', { x: 1460, y: 802, width: 68, height: 20, fill: '#ff0d13' });

/* [text, left, right, cy] fully visible labels */
const labels = [
  ['PAK2', 1421, 1477, 277.5], ['ASPDH', 1357, 1430, 328.5], ['P4HB', 1209, 1265, 346], ['TXLNA', 1140, 1212, 399], ['ACAT1', 1350, 1424, 404],
  ['CNN2', 1042, 1103, 512.5], ['RFC4', 1391, 1445, 526], ['GCSH', 1030, 1090, 572.5], ['SNX6', 1229, 1285, 565], ['UBA1', 1396, 1452, 574.5],
  ['PPIA', 1118, 1163, 630], ['DCUN1D5', 921, 1028, 653], ['TMEM230', 1011, 1118, 698], ['TUBG1', 1226, 1297, 680], ['RALA', 1450, 1506, 694],
  ['PGM3', 1305, 1365, 734.5], ['COTL1', 1105, 1177, 780.5], ['SIL1', 1659, 1703, 281.5], ['ABHD14B', 1516, 1619, 344.5], ['RPS8', 1695, 1747, 413.5],
  ['PPP2R5E', 1791, 1882, 413.5], ['PCK2', 1907, 1962, 431], ['CHP1', 1545, 1602, 439.5], ['YWHAZ', 1682, 1761, 469], ['MRPL44', 1532, 1617, 501],
  ['EIF3L', 1851, 1908, 507], ['SRPRB', 1708, 1774, 538.5], ['LASP1', 1516, 1580, 597], ['RCC2', 1749, 1806, 598.5], ['EIF3C', 1977, 2037, 592],
  ['EIF3H', 1699, 1759, 645], ['RPL22', 1813, 1878, 664], ['EMC2', 1986, 2046, 717.5], ['CLNS1A', 1872, 1958, 745.5], ['CLIP1', 1568, 1625, 783.5],
  ['SLC7A5', 1990, 2072, 824], ['ATPAF2', 1809, 1890, 831], ['RPS9', 1608, 1660, 847], ['GOLPH3', 1478, 1564, 835], ['DLD', 1794, 1839, 887],
  ['PGP', 1706, 1747, 930.5], ['PUS1', 1917, 1970, 899.5], ['C12orf57', 2008, 2112, 938], ['THBS1', 1121, 1189, 831.5], ['KPNA6', 1012, 1084, 832.5],
  ['IMPA1', 1323, 1390, 805.5], ['CCT6A', 1389, 1462, 896], ['GGH', 1110, 1159, 911.5], ['GART', 1025, 1085, 972.5], ['ALDH1B1', 1280, 1381, 966],
  ['SERBP1', 1436, 1513, 974.5], ['RECQL', 1243, 1313, 1010], ['PSME2', 1229, 1297, 1066.5], ['ME2', 936, 980, 1072.5], ['LONP1', 1053, 1123, 1105.5],
  ['EMC1', 1057, 1117, 1164], ['COPS7', 1374, 1445, 1101.5], ['PITPNB', 1420, 1494, 1142], ['SNX3', 1243, 1299, 1158.5], ['COPS8', 1360, 1431, 1199],
  ['EIF2S2', 1471, 1541, 1215.5], ['TCEB1', 1108, 1175, 1241.5], ['PYGB', 1276, 1331, 1300], ['MAGOHB', 1419, 1517, 1302], ['VAPB', 1842, 1898, 1219.5],
  ['ABCF2', 1651, 1720, 1193.5], ['UBE2L3', 1540, 1620, 1167.5], ['GNB2', 1738, 1797, 1127.5], ['MBLAC2', 1584, 1671, 1107.5], ['DHPS', 1744, 1801, 1053],
  ['UBA2', 1594, 1651, 1049.5], ['CMPK1', 1476, 1551, 1086], ['PNPT1', 1574, 1641, 1002]
];
for (const [t, a, b, y] of labels) el('text', { x: (a + b) / 2, y: y + 7.8, textLength: b - a - 2, lengthAdjust: 'spacingAndGlyphs' }).textContent = t;

/* [text, x of first glyph, cy, clipLeft, clipTop, clipRight, clipBottom] covered labels */
const partial = [
  ['GO', 1305, 339, 1300, 320, 1323, 360], ['PS', 1201, 448, 1195, 439, 1218, 470], ['EF', 1245, 441, 1240, 438, 1269, 460], ['TUD2', 1272, 441, 1274, 433, 1330, 460],
  ['ATP6V', 1434, 435.5, 1430, 420, 1505, 460], ['CPNE1', 1156, 503.5, 1150, 490, 1225, 512], ['MPP2', 1301, 491, 1290, 480, 1358, 498], ['SBDS', 1407, 494, 1400, 480, 1470, 493.5],
  ['F', 1178, 555, 1170, 540, 1187, 570], ['-', 1326, 549, 1320, 540, 1340, 560], ['B', 1207, 606, 1209, 590, 1230, 620], ['HGS', 1320, 632, 1310, 610, 1380, 634],
  ['3A', 1043, 646, 1040, 630, 1070, 660], ['MYO', 1143, 682, 1140, 670, 1192, 681], ['UWI', 1332, 666.5, 1330, 650, 1373, 680], ['ATP1B3', 1180, 715, 1170, 712, 1270, 730],
  ['ACM1L', 1403, 737, 1406, 720, 1480, 750], ['SE', 1046, 751, 1040, 740, 1072, 765], ['C6', 1072, 751, 1071, 740, 1100, 747], ['IP', 1135, 739, 1130, 720, 1151, 750],
  ['CMT1', 1950, 504.5, 1949, 490, 2020, 520], ['P', 1662, 520, 1660, 500, 1671.5, 535], ['F', 1809, 558.5, 1805, 550, 1815, 568], ['MAGED2', 1514, 568, 1510, 555, 1620, 564],
  ['B', 1624, 591, 1632, 580, 1650, 600], ['PCBP2', 1872, 581, 1870, 560, 1936, 600], ['HBS1', 1889, 610, 1880, 613, 1936, 630], ['BQLN4', 2026, 665.5, 2026, 650, 2110, 690],
  ['IDH1', 1565, 632, 1560, 629, 1640, 650], ['ACO2', 1926, 684, 1920, 670, 2000, 685], ['RAB', 1570, 717, 1560, 700, 1596, 730], ['A', 1641, 704, 1640, 690, 1653, 720],
  ['CPL', 1657, 705, 1655, 690, 1689, 699], ['C', 1681, 732, 1680, 720, 1689, 745], ['ESD', 1773, 711, 1770, 700, 1805, 725], ['E', 1839, 733, 1838, 720, 1845, 745],
  ['S', 1666, 779.5, 1660, 765, 1680, 790], ['VPS4B', 1724, 761, 1720, 764, 1790, 775], ['4', 1987, 771.5, 1985, 760, 2010, 785], ['RM', 1950, 771.5, 1945, 777, 1987, 785],
  ['CO', 1928, 812, 1920, 800, 1961, 830], ['MP2', 1717, 814, 1723, 800, 1765, 830], ['YTH', 1240, 834.5, 1235, 820, 1275, 850], ['FERMT2', 1303, 845.5, 1300, 838, 1390, 860],
  ['UHD', 1416, 833, 1410, 829, 1452, 850], ['CAL', 1212, 873, 1200, 866, 1249, 890], ['DN', 1268, 882.5, 1260, 870, 1303, 895], ['AJ', 1303, 882.5, 1303, 870, 1330, 883],
  ['SL', 1338, 916, 1335, 900, 1357, 930], ['TA', 1233, 929, 1230, 915, 1262, 945], ['GLN', 1260, 929, 1260, 915, 1304, 931], ['M', 1122, 949.5, 1120, 935, 1140, 965],
  ['CBR3', 1030, 1004, 1020, 1004, 1090, 1020], ['TNP', 1171, 979, 1165, 965, 1212, 995], ['O1', 1213, 979, 1209, 965, 1245, 977], ['F', 1400, 958, 1398, 945, 1405, 970],
  ['ADM', 1344, 1013, 1347, 1000, 1395, 1025], ['N', 1417, 1011, 1419, 1003, 1429, 1015], ['PS', 1179, 1044, 1170, 1030, 1193, 1060], ['R1', 1379, 1062, 1386, 1050, 1405, 1075],
  ['ZM', 1172, 1091, 1170, 1080, 1194, 1100], ['MTH', 1265, 1096, 1260, 1099, 1315, 1110], ['10', 1316, 1097, 1316, 1089, 1345, 1110],
  ['GL1', 1214, 1224, 1210, 1210, 1260, 1240], ['I', 1137, 1203, 1135, 1196, 1145, 1208], ['YWHAG', 1475, 1054, 1470, 1045, 1553, 1053],
  ['QLN1', 1489, 913.5, 1497, 900, 1550, 930], ['5A32', 1563, 913.5, 1571, 900, 1625, 930], ['EIF4', 1618, 932, 1634, 929, 1656, 945], ['EIF5A', 1663, 969.5, 1655, 963, 1730, 985],
  ['FARS', 1813, 915, 1810, 919, 1866, 930], ['PUS7', 1907, 937, 1900, 931, 1965, 950], ['PS', 1831, 966, 1825, 957, 1852, 975], ['SPTLC1', 1884, 975.5, 1875, 969, 1970, 990],
  ['UB3A', 1993, 963.5, 1990, 970, 2050, 975], ['E', 1995, 995, 1995, 996, 2010, 1010], ['O', 1677, 1018, 1670, 1008, 1692, 1015], ['OXA1L', 1731, 1005, 1720, 1000, 1810, 1020],
  ['NHP2L1', 1830, 1006, 1836, 1000, 1914, 1020], ['F2L', 1837, 1066, 1842, 1060, 1866, 1071], ['R', 1690, 1075, 1690, 1066, 1702, 1071], ['S1', 1831, 1105.5, 1836, 1090, 1860, 1120],
  ['3F', 1894, 1103, 1892, 1090, 1925, 1120], ['T1', 1653, 1139, 1653, 1139.5, 1680, 1155], ['A1', 1646, 1249.5, 1650, 1235, 1680, 1265], ['EC1', 1567, 1233, 1577, 1220, 1615, 1250],
  ['-', 1500, 1178, 1495, 1170, 1512, 1190]
];
for (const [t, x, y, l, tp, r, b] of partial) {
  const e = el('text', { x, y: y + 7.8, 'clip-path': clipRect(l, tp, r - l, b - tp), style: 'text-anchor:start', 'letter-spacing': '.5' });
  e.textContent = t;
}
```
